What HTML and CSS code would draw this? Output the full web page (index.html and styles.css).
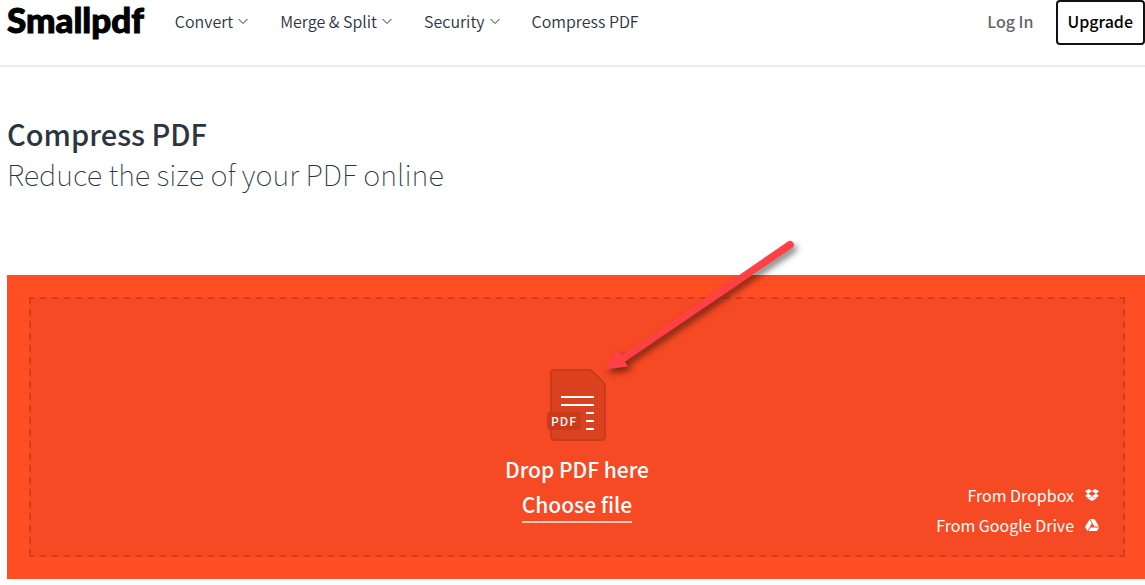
FILE: index.html
```
<!DOCTYPE html>
<html lang="en">
<head>
    <meta charset="UTF-8">
    <meta name="viewport" content="width=device-width, initial-scale=1.0">
    <title>Compress PDF - Reduce the size of your PDF online</title>
    <link rel="stylesheet" href="styles.css">
</head>
<body>
    <header class="header">
        <a href="#" class="logo">Smallpdf</a>
        <nav class="nav">
            <button type="button" class="nav-item">Convert
                <svg class="chevron" viewBox="0 0 10 8"><path d="M0.500 2 L5 6.500 L9.500 2"/></svg>
            </button>
            <button type="button" class="nav-item">Merge &amp; Split
                <svg class="chevron" viewBox="0 0 10 8"><path d="M0.500 2 L5 6.500 L9.500 2"/></svg>
            </button>
            <button type="button" class="nav-item">Security
                <svg class="chevron" viewBox="0 0 10 8"><path d="M0.500 2 L5 6.500 L9.500 2"/></svg>
            </button>
            <a href="#" class="nav-item">Compress PDF</a>
        </nav>
        <div class="account">
            <a href="#" class="login">Log In</a>
            <button type="button" class="upgrade">Upgrade</button>
        </div>
    </header>

    <main>
        <div class="title">
            <h1>Compress PDF</h1>
            <h2>Reduce the size of your PDF online</h2>
        </div>

        <section class="uploader">
            <div class="dropzone">
                <div class="drop-content">
                    <div class="file-icon">
                        <svg width="58" height="72" viewBox="0 0 58 72">
                            <path d="M7 1 H40 Q43 1 45 3 L55 13 Q57 15 57 18 V67 Q57 71 53 71 H7 Q3 71 3 67 V5 Q3 1 7 1 Z" fill="#da411f" stroke="#c93b1b" stroke-width="2"/>
                            <path d="M13 28 H46 M13 36 H46 M38 44 H46 M38 52 H46 M38 60 H46" stroke="#fff" stroke-width="2"/>
                        </svg>
                        <span class="file-type">PDF</span>
                    </div>
                    <p class="drop-text">Drop PDF here</p>
                    <button type="button" class="choose">Choose file</button>
                </div>
                <div class="sources">
                    <a href="#">From Dropbox
                        <svg width="14" height="14" viewBox="0 0 14 14"><path d="M4 1 L7 3 L3 6 L0 3 Z M10 1 L14 3 L11 6 L7 3 Z M0 8 L3 5.500 L7 8 L4 10 Z M14 8 L11 5.500 L7 8 L10 10 Z M2.500 9.500 L4 10.500 L7 8.500 L10 10.500 L11.500 9.500 V10.500 L7 13 L2.500 10.500 Z"/></svg>
                    </a>
                    <a href="#">From Google Drive
                        <svg width="14" height="14" viewBox="0 0 14 14"><path d="M5 1 H9.500 L14 8.500 H9.500 Z M4.500 1.500 L6.800 5.500 L2.500 13 L0 9 Z M5.500 9.500 H14 L12 13 H3.500 Z"/></svg>
                    </a>
                </div>
            </div>
            <svg class="arrow" width="200" height="150" viewBox="0 0 200 150">
                <path d="M198 14 A3.500 3.500 0 0 0 194 7.500 L28 121.500 L23 115 L11 135.500 L34 132.500 L31 127.500 Z"/>
            </svg>
        </section>
    </main>
</body>
</html>
```
FILE: styles.css
```
* {
    margin: 0;
    padding: 0;
    box-sizing: border-box;
}

body {
    background: #fff;
    color: #2c343f;
    font-family: "Noto Sans CJK SC", "Open Sans", sans-serif;
    font-size: 16px;
    line-height: 24px;
}

a {
    color: inherit;
    text-decoration: none;
}

button {
    background: none;
    border: none;
    color: inherit;
    font: inherit;
    cursor: pointer;
}

/* Header */
.header {
    display: flex;
    align-items: flex-start;
    padding-left: 7px;
    padding-bottom: 20px;
    border-bottom: 2px solid #ececec;
}

.logo {
    color: #000;
    font-family: Lato, sans-serif;
    font-size: 35px;
    font-weight: 900;
    line-height: 38px;
    -webkit-text-stroke: 1px #000;
}

.nav {
    display: flex;
    gap: 32px;
    margin-left: 31px;
    padding-top: 9px;
}

.nav-item {
    display: flex;
    align-items: center;
    gap: 5px;
    font-weight: 350;
    white-space: nowrap;
}

.chevron {
    width: 10px;
    height: 8px;
    fill: none;
    stroke: #2c343f;
}

.account {
    display: flex;
    gap: 22px;
    margin-left: auto;
}

.login {
    padding-top: 9px;
    color: #666;
    font-weight: 500;
}

.upgrade {
    height: 45px;
    padding: 0 10px 4px;
    border: 2px solid #111;
    border-radius: 4px;
    color: #000;
    font-weight: 500;
}

/* Page title */
.title {
    padding: 46px 7px 0;
}

.title h1 {
    font-size: 29px;
    font-weight: 500;
    line-height: 40px;
}

.title h2 {
    font-size: 29px;
    font-weight: 100;
    line-height: 40px;
}

/* Upload area */
.uploader {
    position: relative;
    margin: 82px 0 0 7px;
    padding: 22px 20px 22px 22px;
    background: #ff4d24;
}

.dropzone {
    position: relative;
    padding: 72px 0 34px;
    color: #fff;
    --dash-x: repeating-linear-gradient(90deg, #d13f1e 0 5px, transparent 5px 11px, #d13f1e 11px 12px);
    --dash-y: repeating-linear-gradient(180deg, #d13f1e 0 7px, transparent 7px 12px);
    background:
        var(--dash-x) top / 100% 2px no-repeat,
        var(--dash-x) bottom / 100% 2px no-repeat,
        var(--dash-y) left / 2px 100% no-repeat,
        var(--dash-y) right / 2px 100% no-repeat,
        #f54a23;
}

.drop-content {
    display: flex;
    flex-direction: column;
    align-items: center;
}

.file-icon {
    position: relative;
    height: 72px;
}

.file-type {
    position: absolute;
    left: -1px;
    top: 43px;
    width: 34px;
    height: 18px;
    border-radius: 3px;
    background: #c93b1b;
    font-size: 12px;
    font-weight: 500;
    line-height: 18px;
    letter-spacing: 1px;
    text-align: center;
}

.drop-text {
    margin-top: 10px;
    font-size: 21px;
    font-weight: 500;
    line-height: 36px;
}

.choose {
    border-bottom: 2px solid #ffc9bd;
    font-size: 21px;
    font-weight: 500;
    line-height: 34px;
}

.sources {
    position: absolute;
    right: 26px;
    bottom: 20px;
    display: flex;
    flex-direction: column;
    align-items: flex-end;
    gap: 6px;
}

.sources a {
    display: flex;
    align-items: center;
    gap: 11px;
}

.sources svg {
    fill: #fff;
}

.arrow {
    position: absolute;
    left: 587px;
    top: -41px;
    fill: #ff4145;
    filter: drop-shadow(3px 4px 3px rgba(0, 0, 0, 0.5));
    pointer-events: none;
}
```
